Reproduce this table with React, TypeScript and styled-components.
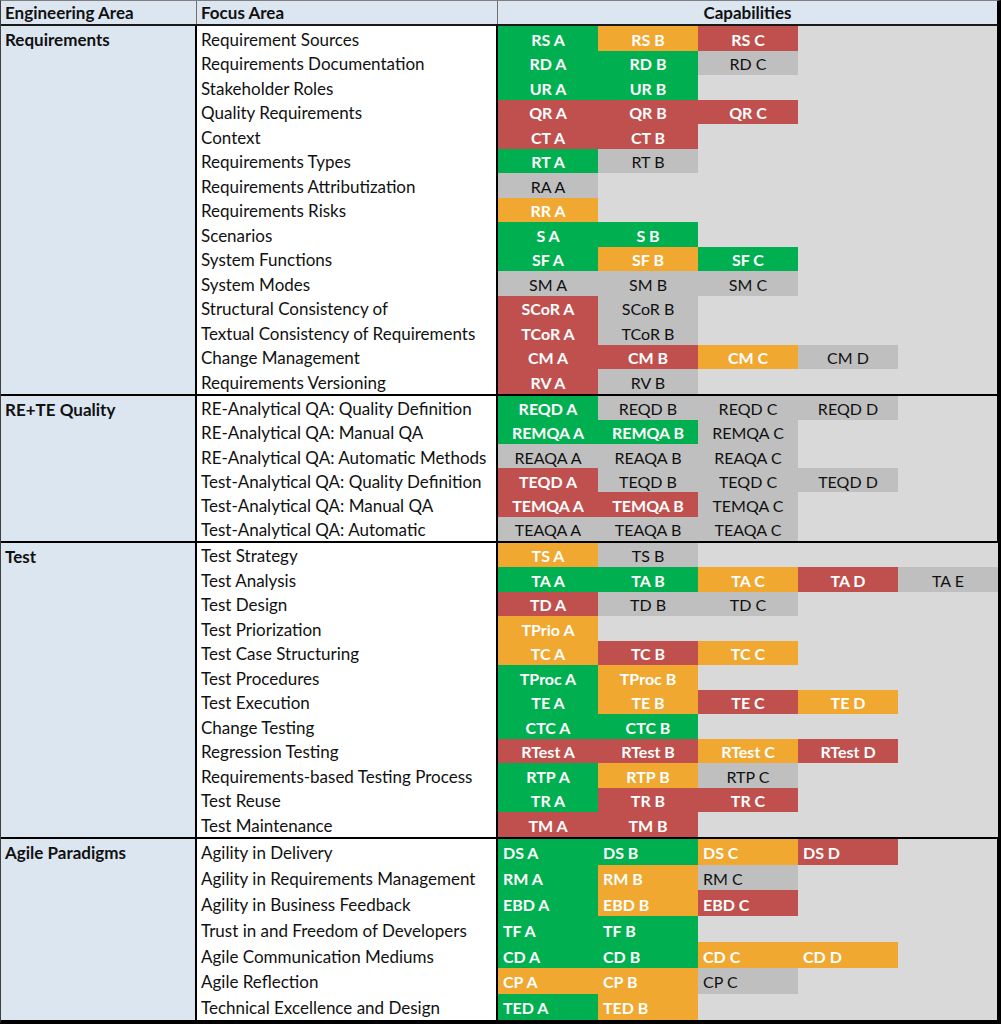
import styled, { createGlobalStyle } from "styled-components";

const GlobalStyle = createGlobalStyle`
    html, body {
        margin: 0;
        padding: 0;
        background: #ffffff;
    }
    body {
        font-family: Lato, "Open Sans", "Liberation Sans", sans-serif;
        color: #111;
    }
`;

type Level = "g" | "o" | "r" | "n";

const COLORS: Record<Level, string> = {
    g: "#00b050",
    o: "#f0a830",
    r: "#c0504d",
    n: "#bfbfbf",
};

interface FocusRow {
    name: string;
    caps: [string, Level][];
}

interface Area {
    name: string;
    rowHeight: number;
    left?: boolean;
    rows: FocusRow[];
}

const AREAS: Area[] = [
    {
        name: "Requirements",
        rowHeight: 24.53,
        rows: [
            { name: "Requirement Sources", caps: [["RS A", "g"], ["RS B", "o"], ["RS C", "r"]] },
            { name: "Requirements Documentation", caps: [["RD A", "g"], ["RD B", "g"], ["RD C", "n"]] },
            { name: "Stakeholder Roles", caps: [["UR A", "g"], ["UR B", "g"]] },
            { name: "Quality Requirements", caps: [["QR A", "r"], ["QR B", "r"], ["QR C", "r"]] },
            { name: "Context", caps: [["CT A", "r"], ["CT B", "r"]] },
            { name: "Requirements Types", caps: [["RT A", "g"], ["RT B", "n"]] },
            { name: "Requirements Attributization", caps: [["RA A", "n"]] },
            { name: "Requirements Risks", caps: [["RR A", "o"]] },
            { name: "Scenarios", caps: [["S A", "g"], ["S B", "g"]] },
            { name: "System Functions", caps: [["SF A", "g"], ["SF B", "o"], ["SF C", "g"]] },
            { name: "System Modes", caps: [["SM A", "n"], ["SM B", "n"], ["SM C", "n"]] },
            { name: "Structural Consistency of", caps: [["SCoR A", "r"], ["SCoR B", "n"]] },
            { name: "Textual Consistency of Requirements", caps: [["TCoR A", "r"], ["TCoR B", "n"]] },
            { name: "Change Management", caps: [["CM A", "r"], ["CM B", "r"], ["CM C", "o"], ["CM D", "n"]] },
            { name: "Requirements Versioning", caps: [["RV A", "r"], ["RV B", "n"]] },
        ],
    },
    {
        name: "RE+TE Quality",
        rowHeight: 24.17,
        rows: [
            { name: "RE-Analytical QA: Quality Definition", caps: [["REQD A", "g"], ["REQD B", "n"], ["REQD C", "n"], ["REQD D", "n"]] },
            { name: "RE-Analytical QA: Manual QA", caps: [["REMQA A", "g"], ["REMQA B", "g"], ["REMQA C", "n"]] },
            { name: "RE-Analytical QA: Automatic Methods", caps: [["REAQA A", "n"], ["REAQA B", "n"], ["REAQA C", "n"]] },
            { name: "Test-Analytical QA: Quality Definition", caps: [["TEQD A", "r"], ["TEQD B", "n"], ["TEQD C", "n"], ["TEQD D", "n"]] },
            { name: "Test-Analytical QA: Manual QA", caps: [["TEMQA A", "r"], ["TEMQA B", "r"], ["TEMQA C", "n"]] },
            { name: "Test-Analytical QA: Automatic", caps: [["TEAQA A", "n"], ["TEAQA B", "n"], ["TEAQA C", "n"]] },
        ],
    },
    {
        name: "Test",
        rowHeight: 24.5,
        rows: [
            { name: "Test Strategy", caps: [["TS A", "o"], ["TS B", "n"]] },
            { name: "Test Analysis", caps: [["TA A", "g"], ["TA B", "g"], ["TA C", "o"], ["TA D", "r"], ["TA E", "n"]] },
            { name: "Test Design", caps: [["TD A", "r"], ["TD B", "n"], ["TD C", "n"]] },
            { name: "Test Priorization", caps: [["TPrio A", "o"]] },
            { name: "Test Case Structuring", caps: [["TC A", "o"], ["TC B", "r"], ["TC C", "o"]] },
            { name: "Test Procedures", caps: [["TProc A", "g"], ["TProc B", "o"]] },
            { name: "Test Execution", caps: [["TE A", "g"], ["TE B", "o"], ["TE C", "r"], ["TE D", "o"]] },
            { name: "Change Testing", caps: [["CTC A", "g"], ["CTC B", "g"]] },
            { name: "Regression Testing", caps: [["RTest A", "r"], ["RTest B", "r"], ["RTest C", "o"], ["RTest D", "r"]] },
            { name: "Requirements-based Testing Process", caps: [["RTP A", "g"], ["RTP B", "o"], ["RTP C", "n"]] },
            { name: "Test Reuse", caps: [["TR A", "g"], ["TR B", "r"], ["TR C", "r"]] },
            { name: "Test Maintenance", caps: [["TM A", "r"], ["TM B", "r"]] },
        ],
    },
    {
        name: "Agile Paradigms",
        rowHeight: 25.86,
        left: true,
        rows: [
            { name: "Agility in Delivery", caps: [["DS A", "g"], ["DS B", "g"], ["DS C", "o"], ["DS D", "r"]] },
            { name: "Agility in Requirements Management", caps: [["RM A", "g"], ["RM B", "o"], ["RM C", "n"]] },
            { name: "Agility in Business Feedback", caps: [["EBD A", "g"], ["EBD B", "o"], ["EBD C", "r"]] },
            { name: "Trust in and Freedom of Developers", caps: [["TF A", "g"], ["TF B", "g"]] },
            { name: "Agile Communication Mediums", caps: [["CD A", "g"], ["CD B", "g"], ["CD C", "o"], ["CD D", "o"]] },
            { name: "Agile Reflection", caps: [["CP A", "o"], ["CP B", "o"], ["CP C", "n"]] },
            { name: "Technical Excellence and Design", caps: [["TED A", "g"], ["TED B", "o"]] },
        ],
    },
];

const Sheet = styled.div`
    width: 1001px;
    box-sizing: border-box;
    border-top: 1px solid #7f7f7f;
    border-left: 1px solid #404040;
    border-right: 4px solid #000;
    border-bottom: 4px solid #000;
    font-size: 17px;
`;

const HeaderRow = styled.div`
    display: grid;
    grid-template-columns: 196px 301px 1fr;
    height: 25px;
    box-sizing: border-box;
    background: #dce6f1;
    border-bottom: 2px solid #1a1a1a;
    font-weight: 700;
`;

const HeaderCell = styled.div<{ $center?: boolean; $last?: boolean }>`
    display: flex;
    align-items: center;
    justify-content: ${(p) => (p.$center ? "center" : "flex-start")};
    padding-left: ${(p) => (p.$center ? "0" : "4px")};
    box-sizing: border-box;
    border-right: ${(p) => (p.$last ? "none" : "1px solid #6f6f6f")};
    white-space: nowrap;
`;

const Section = styled.div<{ $rows: number; $h: number; $last?: boolean }>`
    display: grid;
    grid-template-columns: 196px 301px 1fr;
    grid-template-rows: repeat(${(p) => p.$rows}, ${(p) => p.$h}px);
    border-bottom: ${(p) => (p.$last ? "none" : "2px solid #000")};
`;

const AreaCell = styled.div<{ $rows: number }>`
    grid-row: 1 / span ${(p) => p.$rows};
    grid-column: 1;
    background: #dce6f1;
    border-right: 2px solid #000;
    box-sizing: border-box;
    font-weight: 700;
    padding: 3px 4px;
    white-space: nowrap;
`;

const FocusCell = styled.div`
    grid-column: 2;
    display: flex;
    align-items: center;
    padding: 2px 0 0 4px;
    box-sizing: border-box;
    background: #fff;
    border-right: 2px solid #000;
    white-space: nowrap;
    color: #111;
`;

const CapRow = styled.div`
    grid-column: 3;
    display: flex;
    background: #d9d9d9;
`;

const CapCell = styled.div<{ $level: Level; $left?: boolean }>`
    width: 100px;
    flex: 0 0 100px;
    display: flex;
    align-items: center;
    justify-content: ${(p) => (p.$left ? "flex-start" : "center")};
    padding: 2px 0 0 ${(p) => (p.$left ? "5px" : "0")};
    box-sizing: border-box;
    background: ${(p) => COLORS[p.$level]};
    color: ${(p) => (p.$level === "n" ? "#111" : "#fff")};
    font-size: 16px;
    font-weight: ${(p) => (p.$level === "n" ? 400 : 700)};
    white-space: nowrap;
`;

function App() {
    return (
        <>
            <GlobalStyle />
            <Sheet>
                <HeaderRow>
                    <HeaderCell>Engineering Area</HeaderCell>
                    <HeaderCell>Focus Area</HeaderCell>
                    <HeaderCell $center $last>Capabilities</HeaderCell>
                </HeaderRow>
                {AREAS.map((area, ai) => (
                    <Section
                        key={area.name}
                        $rows={area.rows.length}
                        $h={area.rowHeight}
                        $last={ai === AREAS.length - 1}
                    >
                        <AreaCell $rows={area.rows.length}>{area.name}</AreaCell>
                        {area.rows.map((row) => [
                            <FocusCell key={row.name + "-f"}>{row.name}</FocusCell>,
                            <CapRow key={row.name + "-c"}>
                                {row.caps.map(([label, level]) => (
                                    <CapCell key={label} $level={level} $left={area.left}>
                                        {label}
                                    </CapCell>
                                ))}
                            </CapRow>,
                        ])}
                    </Section>
                ))}
            </Sheet>
        </>
    );
}

export default App;
